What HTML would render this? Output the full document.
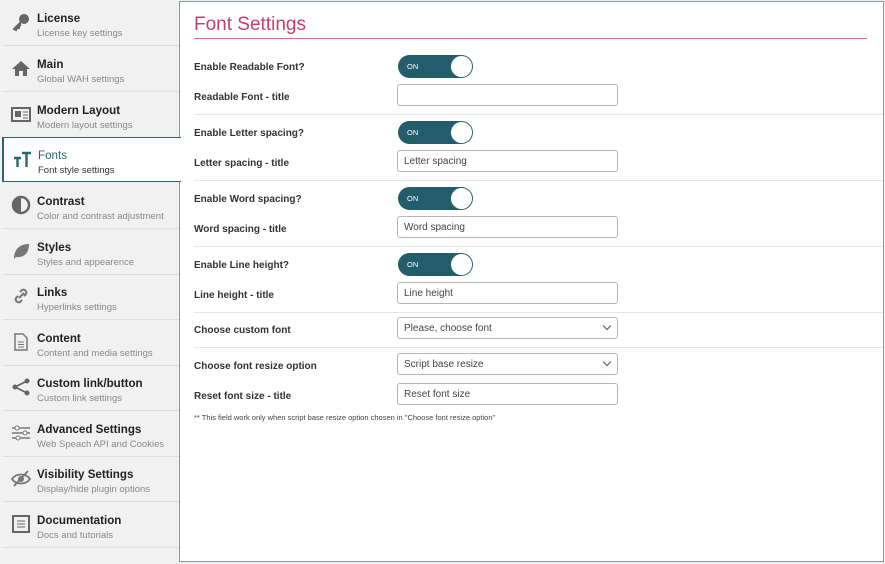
<!DOCTYPE html>
<html><head><meta charset="utf-8"><style>
*{box-sizing:border-box;margin:0;padding:0}
body{width:885px;height:564px;background:#f1f1f1;font-family:"Liberation Sans",sans-serif;position:relative;overflow:hidden}
.side{position:absolute;left:0;top:0;width:180px}
.it{position:absolute;left:3px;width:176px;height:45px;border-bottom:1px solid #dcdcdc}
.it .ic{position:absolute;left:8px;top:11px;width:20px;height:20px}
.it b{position:absolute;left:34px;top:11px;font-size:11.6px;color:#222;font-weight:bold}
.it span{position:absolute;left:34px;top:27px;font-size:9.5px;color:#888}
.it.act{background:#fff;border-left:2px solid #2b6572;border-top:1px solid #2b6572;border-bottom:1px solid #2b6572;left:2px;width:179px;z-index:2}
.it.act b{color:#2b6572;font-weight:normal}
.it.act span{color:#333}
.main{position:absolute;left:179px;top:1px;width:705px;height:561px;background:#fff;border:1px solid #7f9aa1}
h1{position:absolute;left:14px;top:12px;font-size:19px;font-weight:normal;color:#c2416e}
.hl{position:absolute;left:14px;right:16px;top:36px;border-top:1px solid #d06d8f}
.lb{position:absolute;left:14px;font-size:10px;font-weight:bold;color:#333}
.tg{position:absolute;left:218px;width:75px;height:23px;border-radius:12px;background:#235d6b}
.tg i{position:absolute;left:9px;top:7px;font-size:7.5px;color:#fff;font-style:normal}
.tg u{position:absolute;right:1px;top:1px;width:21px;height:21px;border-radius:50%;background:#fff;box-shadow:0 0 1px #888}
.in{position:absolute;left:217px;width:221px;height:22px;border:1px solid #b5b5b5;border-radius:3px;font-size:10px;color:#444;padding:5px 6px}
.sep{position:absolute;left:14px;right:0;border-top:1px solid #e6e6e6}
.ar{position:absolute;right:7px;top:5px;width:6px;height:6px;border-right:1px solid #555;border-bottom:1px solid #555;transform:rotate(45deg)}
.note{position:absolute;left:14px;top:411px;font-size:7.5px;color:#444}
svg{display:block}
</style></head><body>
<div class="side">
<div class="it" style="top:1px"><svg class="ic" viewBox="0 0 20 20"><circle cx="13" cy="7" r="5" fill="#666"/><path d="M10 10L3 17l2 1 1-2 2 0 0-2 2-1" fill="#666" stroke="#666" stroke-width="2"/></svg><b>License</b><span>License key settings</span></div>
<div class="it" style="top:47px"><svg class="ic" viewBox="0 0 20 20"><path d="M10 3L1 11h3v7h4v-5h4v5h4v-7h3z" fill="#666"/></svg><b>Main</b><span>Global WAH settings</span></div>
<div class="it" style="top:93px"><svg class="ic" viewBox="0 0 20 20"><rect x="1" y="4" width="18" height="13" fill="none" stroke="#666" stroke-width="2"/><rect x="4" y="7" width="6" height="6" fill="#666"/><path d="M12 8h5M12 11h5M12 14h5" stroke="#666"/></svg><b>Modern Layout</b><span>Modern layout settings</span></div>
<div class="it act" style="top:137px"><svg class="ic" viewBox="0 0 20 20"><path d="M2 9h7M5.5 9v9M10 4h9M14.5 4v14" stroke="#2b6572" stroke-width="2.4"/></svg><b>Fonts</b><span>Font style settings</span></div>
<div class="it" style="top:184px"><svg class="ic" viewBox="0 0 20 20"><circle cx="10" cy="10" r="8" fill="none" stroke="#666" stroke-width="2.5"/><path d="M10 2a8 8 0 0 0 0 16z" fill="#666"/></svg><b>Contrast</b><span>Color and contrast adjustment</span></div>
<div class="it" style="top:230px"><svg class="ic" viewBox="0 0 20 20"><path d="M3 18C3 8 9 3 18 3c0 9-5 14-13 13" fill="#777"/></svg><b>Styles</b><span>Styles and appearence</span></div>
<div class="it" style="top:275px"><svg class="ic" viewBox="0 0 20 20"><path d="M8 12l5-5M9 6l2-2a3 3 0 0 1 4 4l-2 2M11 14l-2 2a3 3 0 0 1-4-4l2-2" fill="none" stroke="#777" stroke-width="2"/></svg><b>Links</b><span>Hyperlinks settings</span></div>
<div class="it" style="top:321px"><svg class="ic" viewBox="0 0 20 20"><path d="M4 2h8l4 4v12H4z" fill="none" stroke="#777" stroke-width="1.5"/><path d="M7 10h6M7 12.5h6M7 15h6" stroke="#777"/></svg><b>Content</b><span>Content and media settings</span></div>
<div class="it" style="top:366px"><svg class="ic" viewBox="0 0 20 20"><circle cx="4" cy="10" r="2.5" fill="#666"/><circle cx="16" cy="4" r="2.5" fill="#666"/><circle cx="16" cy="16" r="2.5" fill="#666"/><path d="M4 10L16 4M4 10l12 6" stroke="#666" stroke-width="1.8"/></svg><b>Custom link/button</b><span>Custom link settings</span></div>
<div class="it" style="top:412px"><svg class="ic" viewBox="0 0 20 20"><path d="M1 5h18M1 10h18M1 15h18" stroke="#777" stroke-width="1.5"/><circle cx="6" cy="5" r="2" fill="#fff" stroke="#777"/><circle cx="14" cy="10" r="2" fill="#fff" stroke="#777"/><circle cx="7" cy="15" r="2" fill="#fff" stroke="#777"/></svg><b>Advanced Settings</b><span>Web Speach API and Cookies</span></div>
<div class="it" style="top:457px"><svg class="ic" viewBox="0 0 20 20"><path d="M1 11c4-6 14-6 18 0-4 6-14 6-18 0z" fill="none" stroke="#777" stroke-width="1.8"/><circle cx="10" cy="11" r="3" fill="#777"/><path d="M3 18L17 3" stroke="#777" stroke-width="1.8"/></svg><b>Visibility Settings</b><span>Display/hide plugin options</span></div>
<div class="it" style="top:503px"><svg class="ic" viewBox="0 0 20 20"><rect x="2" y="2" width="16" height="16" fill="none" stroke="#666" stroke-width="2"/><path d="M6 7h8M6 10h8M6 13h8" stroke="#666"/></svg><b>Documentation</b><span>Docs and tutorials</span></div>
</div>
<div class="main">
<h1>Font Settings</h1><div class="hl"></div>
<div class="lb" style="top:60px">Enable Readable Font?</div><div class="tg" style="top:53px"><i>ON</i><u></u></div>
<div class="lb" style="top:90px">Readable Font - title</div><div class="in" style="top:82px"></div>
<div class="sep" style="top:112px"></div>
<div class="lb" style="top:126px">Enable Letter spacing?</div><div class="tg" style="top:119px"><i>ON</i><u></u></div>
<div class="lb" style="top:156px">Letter spacing - title</div><div class="in" style="top:148px">Letter spacing</div>
<div class="sep" style="top:178px"></div>
<div class="lb" style="top:192px">Enable Word spacing?</div><div class="tg" style="top:185px"><i>ON</i><u></u></div>
<div class="lb" style="top:222px">Word spacing - title</div><div class="in" style="top:214px">Word spacing</div>
<div class="sep" style="top:244px"></div>
<div class="lb" style="top:258px">Enable Line height?</div><div class="tg" style="top:251px"><i>ON</i><u></u></div>
<div class="lb" style="top:288px">Line height - title</div><div class="in" style="top:280px">Line height</div>
<div class="sep" style="top:310px"></div>
<div class="lb" style="top:323px">Choose custom font</div><div class="in" style="top:315px">Please, choose font<div class="ar"></div></div>
<div class="sep" style="top:345px"></div>
<div class="lb" style="top:359px">Choose font resize option</div><div class="in" style="top:351px">Script base resize<div class="ar"></div></div>
<div class="lb" style="top:389px">Reset font size - title</div><div class="in" style="top:381px">Reset font size</div>
<div class="note">** This field work only when script base resize option chosen in "Choose font resize option"</div>
</div>
</body></html>
